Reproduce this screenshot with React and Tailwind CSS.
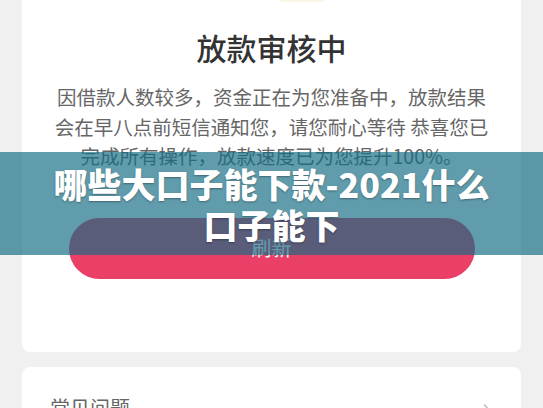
export default function App() {
  return (
    <div className="relative w-[543px] h-[408px] overflow-hidden bg-[#f0f0f0] font-['Noto_Sans_CJK_SC',sans-serif]">
      <div className="mx-[22px] h-[352px] rounded-b-[8px] bg-white flex flex-col items-center">
        <div className="w-[44px] h-[2px] rounded-b-full bg-[#f9f6e6] ml-[60px]" />
        <h1 className="mt-[26px] text-[30px] leading-[38px] font-medium text-[#333]">放款审核中</h1>
        <p className="mt-[16px] text-[19.5px] leading-[29.5px] text-[#666] text-center whitespace-nowrap">
          因借款人数较多，资金正在为您准备中，放款结果
          <br />
          会在早八点前短信通知您，请您耐心等待 恭喜您已
          <br />
          完成所有操作，放款速度已为您提升100%。
        </p>
        <button className="mt-[47px] w-[406px] h-[61px] rounded-full bg-[#ea4068] text-white text-[20px] leading-[28px]">
          刷新
        </button>
      </div>
      <div className="mt-[15px] mx-[22px] h-[60px] rounded-t-[8px] bg-white flex items-start justify-between pl-[28px] pr-[24px] pt-[27px]">
        <span className="text-[20px] leading-[28px] text-[#666]">常见问题</span>
        <svg width="20" height="20" viewBox="0 0 24 24" fill="none" stroke="#c4c4c4" strokeWidth="2" strokeLinecap="round" strokeLinejoin="round" className="mt-[6px]">
          <path d="m9 6 6 6-6 6" />
        </svg>
      </div>
      <div className="absolute left-0 top-[152px] w-[543px] h-[103px] bg-[rgba(18,107,131,0.67)] flex items-center justify-center">
        <div className="text-center text-white text-[34px] leading-[41px] font-black [text-shadow:0_1px_2px_rgba(0,0,0,0.35)]">
          哪些大口子能下款-2021什么
          <br />
          口子能下
        </div>
      </div>
    </div>
  );
}
